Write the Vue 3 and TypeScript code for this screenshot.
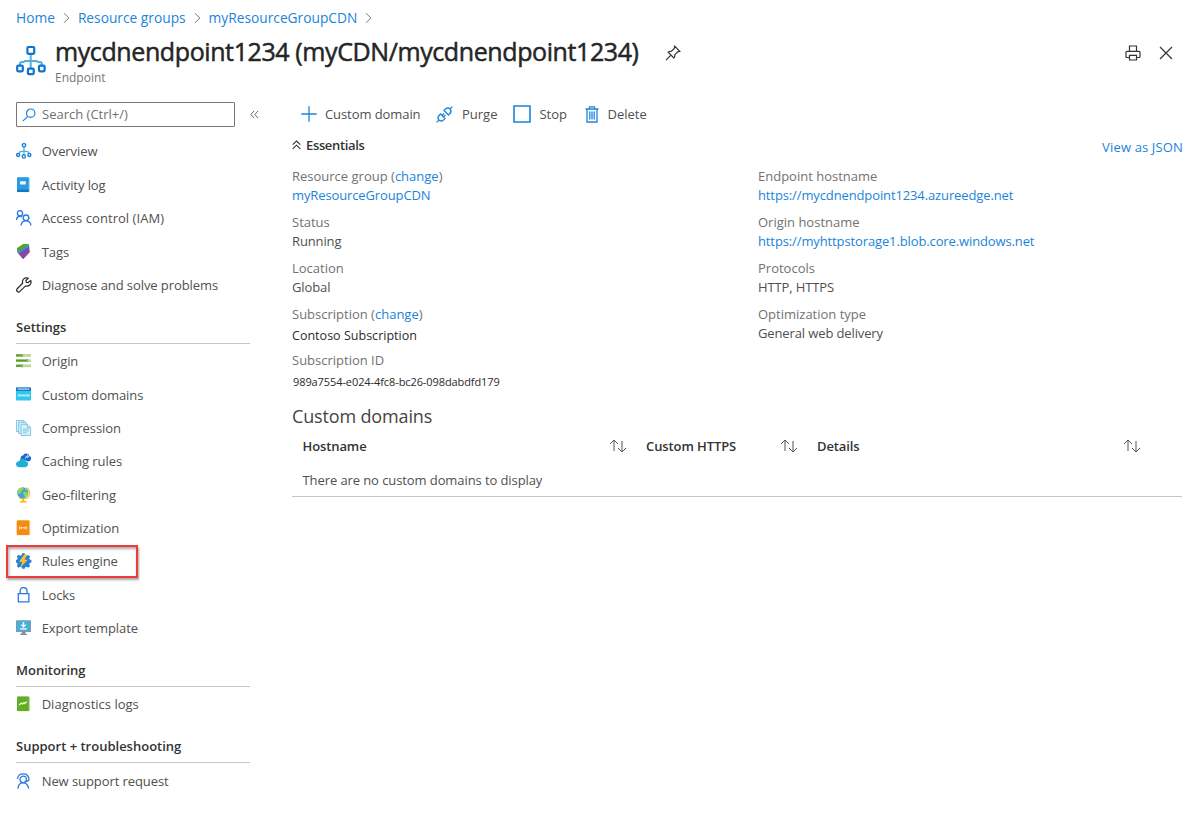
<script setup lang="ts">
interface NavItem {
  label: string
  icon: string
  marked?: boolean
}
interface NavGroup {
  title?: string
  items: NavItem[]
}

const icons: Record<string, string> = {
  endpoint:
    '<path d="M8 4.5V11M3 11.5Q3 8.3 5.4 8.3H10.6Q13 8.3 13 11.5" fill="none" stroke="#50b0dc" stroke-width="1.3"/><g fill="#fff" stroke="#1f86d6" stroke-width="1.4"><circle cx="8" cy="2.3" r="1.7"/><circle cx="2.1" cy="12" r="1.5"/><circle cx="13.4" cy="12" r="1.5"/><circle cx="7.8" cy="13.4" r="1.6"/></g>',
  log:
    '<rect x="1" y=".2" width="13" height="15" rx="1" fill="#b9dcf3"/><rect x="1" y=".2" width="11.8" height="14.8" rx="1" fill="#2b9ae2"/><rect x="1" y="12.6" width="11.8" height="2.4" fill="#1577c4"/><rect x="4" y="4.3" width="5.8" height="3.3" rx=".5" fill="#eef8ff"/>',
  people:
    '<g fill="none" stroke="#2b79e0" stroke-width="1.35"><circle cx="4" cy="3.2" r="2.6"/><path d="M.4 10Q1 6.2 4 6.2Q5.2 6.2 6 6.9"/><circle cx="10" cy="7.8" r="2.8"/><path d="M5 15.4Q5.7 10.8 10 10.8T15 15.4"/></g>',
  tag:
    '<path d="M1 4.900Q1 4.400 1.500 4L7 .3 11.600 0Q12.600 0 13 1L13.800 8.300 7.600 14.800Q7 15.300 6.400 14.600L1.800 9Z" fill="#8547a8"/><path d="M1 4.900Q1 4.400 1.500 4L7 .3 11.600 0Q12.600 0 12.900.7L1.500 7.400Z" fill="#58a51c"/><path d="M1.500 7.300 12.900.6 13.200 2.600 2.500 9.600 1.800 9Z" fill="#2d9fbd"/>',
  wrench:
    '<path d="M14.7 3.5 12.2 5.6 10.3 5.3 10 3.5 12.2 1.2Q9.5.2 7.5 2.1 6 3.8 6.6 6.2L1 12Q.2 13.3 1.3 14.5 2.6 15.5 3.9 14.4L9.6 8.9Q12.2 9.7 14 7.8 15.6 6 14.7 3.5Z" fill="none" stroke="#333" stroke-width="1.3" stroke-linejoin="round"/>',
  origin:
    '<g fill="#b8dc9b"><rect x="0" y="1" width="15" height="2.8"/><rect x="0" y="6.2" width="15" height="2.8"/><rect x="0" y="11.4" width="15" height="2.8"/></g><g fill="#559f1b"><rect x="0" y="1.4" width="5.5" height="2"/><rect x="0" y="6.6" width="10.5" height="2"/><rect x="0" y="11.8" width="5.5" height="2"/></g><g fill="#9b9b9b"><rect x="5" y="1" width="2" height="2.8"/><rect x="10" y="6.2" width="2" height="2.8"/><rect x="5" y="11.4" width="2" height="2.8"/></g>',
  www:
    '<rect y=".6" width="15" height="13" rx=".8" fill="#32c7ee"/><path d="M0 1.4Q0 .6.8.6H14.2Q15 .6 15 1.4V3.7H0Z" fill="#0c68b4"/><rect x="1.4" y="1.5" width="12.2" height="1.1" fill="#dff3ff"/><path d="m2 7.3.9 2.2.9-2.2.9 2.2.8-2.2m.6 0 .9 2.2.8-2.2.9 2.2.8-2.2m.6 0 .9 2.2.8-2.2.9 2.2.8-2.2" fill="none" stroke="#d5f7ff" stroke-width=".8"/>',
  compress:
    '<g fill="#dcf2fb" stroke="#74bfe0" stroke-width=".9"><path d="M.4.4H8V11.5H.4Z"/><path d="M2.7 2.3H10V13.4H2.7Z"/><path d="M5 4.3H11.5L14.6 7.3V15.5H5Z"/><path d="M11.3 4.5V7.4H14.6M6.8 9.1H12.8M6.8 11H12.8M6.8 12.9H10.8"/></g>',
  caching:
    '<path d="M4.5 6Q4.4 2.8 7 2.4 8.2.2 10.6.5 13 .8 13.5 3 15.4 3.7 15.1 6 14.7 7.7 12.6 8.5Z" fill="#1868cf"/><path d="M9.3 5.6Q9.5 3 12.2 3.2M11 1.8l1.6 1.5-1.5 1.5" fill="none" stroke="#a4d8fa" stroke-width="1.1"/><path d="M3 14.2Q0 13.8 0 11.1.1 8.5 3 8.2 3.7 5.6 6.3 5.5 9.1 5.6 9.7 8.2 12.1 8.4 12.2 11.1 12.1 13.9 9.6 14.2Z" fill="#20afd1"/>',
  geo:
    '<path d="M10.5.6Q14.2 3 13.4 7.3 12.2 12 7.6 12 4.7 12.1 2.8 10" fill="none" stroke="#f4c430" stroke-width="1.3"/><circle cx="6.8" cy="5.8" r="5.6" fill="#3aa5dd"/><path d="M2 3Q5 .2 7.8.6L7 3 5.500 4 5 6 3 7 1.400 6Q1.200 4.200 2 3ZM7.200 5l3-.3 2 2-1 2.500-2 1.300-1.600-2.700ZM9 1l2.300 1.700-2 .9Z" fill="#9ed053"/><path d="M6.500 12H8v2h2.500v1.500H4V14h2.500Z" fill="#f4b417"/>',
  optimize:
    '<rect x=".8" y=".2" width="13.4" height="15" rx="1" fill="#ffc16a"/><rect x=".8" y=".6" width="12.2" height="14.4" rx=".8" fill="#f68b12"/><path d="M4 6Q2.6 7.8 4 9.6M10 6Q11.4 7.8 10 9.6M5.5 7.8H8.7" fill="none" stroke="#ffe9c8" stroke-width="1"/><circle cx="5.4" cy="7.8" r=".9" fill="#fff6e5"/><circle cx="8.7" cy="7.8" r=".9" fill="#fff6e5"/>',
  rules:
    '<path d="m6.2.2 2.5 0 .5 1.9 1.4.7 1.8-.9 1.7 1.7-.9 1.8.5 1.2 1.7.4v2.4l-1.7.5-.5 1.3.9 1.7-1.7 1.8-1.8-.9-1.4.5-.5 1.5H6.2l-.5-1.5-1.4-.6-1.8 1-1.7-1.8.9-1.7-.5-1.3L0 9.4V6.9l1.2-.4.5-1.3-.9-1.7L2.5 1.8l1.8.9 1.4-.6Z" fill="#2781db"/><path d="M8.3 1.500 3 8.800h3.400L4.300 14.500 11.800 6.800H8.500L11.500 1.500Z" fill="#ffc329"/>',
  lock:
    '<path d="M2.3 6.6H12.9V14.8H2.3ZM4.2 6.6V3.9Q4.2.5 7.6.5T11 3.9V6.6" fill="none" stroke="#2b79e0" stroke-width="1.3"/>',
  export:
    '<rect x="0" y=".3" width="15" height="11.7" rx=".6" fill="#8b979e"/><rect x=".8" y="1" width="13.4" height="10.2" fill="#48b0dc"/><path d="M5.9 12h3.4l.7 2h1v1H4v-1h1.2Z" fill="#899299"/><path d="M7.5 2v4.6M5.2 4.6l2.3 2.3 2.3-2.3M4.2 8.8h6.6" fill="none" stroke="#fff" stroke-width="1.3"/>',
  diagnostics:
    '<rect x="1" y=".4" width="13" height="14.9" rx="1" fill="#b5d991"/><rect x="1" y=".4" width="11.8" height="14.5" rx="1" fill="#63ac24"/><path d="m3 9 2.5-2 1 1.2L8 6.5l.5 1L11 5.8" fill="none" stroke="#f1fce3" stroke-width="1.2"/>',
  support:
    '<g fill="none" stroke="#2b79e0" stroke-width="1.3"><circle cx="7.2" cy="6.4" r="3.2"/><path d="M1.4 5.8Q2 .8 7.2.8T13 6.1Q13 8.3 10.2 8.3H8.5M1.9 15.6Q2.4 9.8 7.1 9.8T12.7 15.6"/></g>',
}

const nav: NavGroup[] = [
  {
    items: [
      { label: 'Overview', icon: 'endpoint' },
      { label: 'Activity log', icon: 'log' },
      { label: 'Access control (IAM)', icon: 'people' },
      { label: 'Tags', icon: 'tag' },
      { label: 'Diagnose and solve problems', icon: 'wrench' },
    ],
  },
  {
    title: 'Settings',
    items: [
      { label: 'Origin', icon: 'origin' },
      { label: 'Custom domains', icon: 'www' },
      { label: 'Compression', icon: 'compress' },
      { label: 'Caching rules', icon: 'caching' },
      { label: 'Geo-filtering', icon: 'geo' },
      { label: 'Optimization', icon: 'optimize' },
      { label: 'Rules engine', icon: 'rules', marked: true },
      { label: 'Locks', icon: 'lock' },
      { label: 'Export template', icon: 'export' },
    ],
  },
  { title: 'Monitoring', items: [{ label: 'Diagnostics logs', icon: 'diagnostics' }] },
  { title: 'Support + troubleshooting', items: [{ label: 'New support request', icon: 'support' }] },
]

interface Fact {
  label: string
  value: string
  change?: boolean
  link?: boolean
  kind?: string
}
const columns: Fact[][] = [
  [
    { label: 'Resource group', value: 'myResourceGroupCDN', change: true, link: true },
    { label: 'Status', value: 'Running' },
    { label: 'Location', value: 'Global' },
    { label: 'Subscription', value: 'Contoso Subscription', change: true, kind: 'name' },
    { label: 'Subscription ID', value: '989a7554-e024-4fc8-bc26-098dabdfd179', kind: 'guid' },
  ],
  [
    { label: 'Endpoint hostname', value: 'https://mycdnendpoint1234.azureedge.net', link: true },
    { label: 'Origin hostname', value: 'https://myhttpstorage1.blob.core.windows.net', link: true },
    { label: 'Protocols', value: 'HTTP, HTTPS' },
    { label: 'Optimization type', value: 'General web delivery' },
  ],
]
const crumbs = ['Home', 'Resource groups', 'myResourceGroupCDN']
const headers = ['Hostname', 'Custom HTTPS', 'Details']
</script>

<template>
  <div class="page">
    <nav class="crumbs">
      <template v-for="c in crumbs" :key="c">
        <a class="link">{{ c }}</a>
        <svg class="chev" width="7" height="12" viewBox="0 0 7 12"><path d="M1 1.2 5.8 6 1 10.8" /></svg>
      </template>
    </nav>

    <header class="head">
      <svg class="head-icon" width="30" height="31" viewBox="0 0 30 31">
        <path d="M14.7 9V23M4 21V18.5Q4 17 6 17H7.5L9 16H20.5L22 17H24Q25.8 17 25.8 18.5V21" fill="none" stroke="#50b0dc" stroke-width="2" />
        <g fill="#fff" stroke="#0f74cc" stroke-width="2.2">
          <rect x="11.4" y="2" width="6.8" height="6.8" rx="1" />
          <rect x="1.2" y="20.7" width="5.6" height="5.6" rx="1" />
          <rect x="11.9" y="23.6" width="5.8" height="5.6" rx="1" />
          <rect x="23" y="20.7" width="5.6" height="5.6" rx="1" />
        </g>
      </svg>
      <div class="titles">
        <h1>mycdnendpoint1234 (myCDN/mycdnendpoint1234)</h1>
        <span class="kind">Endpoint</span>
      </div>
      <svg class="pin" width="16" height="16" viewBox="0 0 16 16"><path d="M9.7 1.2 14.8 6.3 12.7 6.8 9.9 9.7Q9.9 11.7 8.9 13L3.1 7.2Q4.5 6.2 6.5 6.2L9.3 3.4ZM6 10.1 1 15.1" /></svg>
      <div class="head-actions">
        <svg width="16" height="16" viewBox="0 0 16 16"><path d="M4.5 6.2V1H11.5V6.2M4.3 12.5H2Q1 12.5 1 11.5V7.5Q1 6.3 2.2 6.3H13.8Q15 6.3 15 7.5V11.5Q15 12.5 14 12.5H11.7M4.5 10.3H11.5V15H4.5Z" /></svg>
        <svg width="14" height="14" viewBox="0 0 14 14"><path d="M1 1 13 13M13 1 1 13" /></svg>
      </div>
    </header>

    <div class="body">
      <aside class="side">
        <div class="search-row">
          <div class="search">
            <svg width="14" height="14" viewBox="0 0 14 14"><circle cx="8.7" cy="5.2" r="4.2" /><path d="M5.7 8.3.8 13.2" /></svg>
            <span>Search (Ctrl+/)</span>
          </div>
          <svg class="collapse" width="9" height="9" viewBox="0 0 9 9"><path d="M4.2.8.8 4.5 4.2 8.2M8.2.8 4.8 4.5 8.2 8.2" /></svg>
        </div>
        <section v-for="(g, i) in nav" :key="i">
          <h2 v-if="g.title">{{ g.title }}</h2>
          <div v-for="n in g.items" :key="n.label" class="item" :class="[n.icon, { marked: n.marked }]">
            <svg width="16" height="16" viewBox="0 0 16 16" v-html="icons[n.icon]"></svg>
            <span>{{ n.label }}</span>
          </div>
        </section>
      </aside>

      <main class="main">
        <div class="toolbar">
          <svg width="16" height="16" viewBox="0 0 16 16"><path d="M8 .3V15.7M.3 8H15.7" /></svg>
          <span class="add">Custom domain</span>
          <svg width="17" height="17" viewBox="0 0 17 17"><path d="M.6 16.400 2.900 14.100M16.400.6 14.100 2.900M2.900 14.100Q1 11.500 3 9.500L4.500 8 9 12.500 7.500 14Q5.300 16 2.900 14.100ZM14.100 2.900Q16 5.500 14 7.500L12.500 9 8 4.500 9.500 3Q11.700 1 14.100 2.900ZM6 9.500 8 7.500M7.500 11 9.500 9" /></svg>
          <span class="purge">Purge</span>
          <svg width="18" height="18" viewBox="0 0 18 18"><path d="M1 1H17V17H1Z" stroke-width="1.6" /></svg>
          <span class="stop">Stop</span>
          <svg width="14" height="17" viewBox="0 0 14 17"><path d="M.5 3H13.5M4.5 2.8V.8H9.5V2.8M2 3V16H12V3M4.8 5.5V13.5M7 5.5V13.5M9.2 5.5V13.5" /></svg>
          <span class="delete">Delete</span>
        </div>

        <div class="ess-head">
          <svg width="9" height="10" viewBox="0 0 9 10"><path d="M.7 4.7 4.5 1 8.3 4.7M.7 8.9 4.5 5.2 8.3 8.9" /></svg>
          <strong>Essentials</strong>
          <a class="link">View as JSON</a>
        </div>

        <div class="facts">
          <dl v-for="(col, i) in columns" :key="i">
            <div v-for="f in col" :key="f.label" class="fact">
              <dt>{{ f.label }}<template v-if="f.change"> (<a class="link">change</a>)</template></dt>
              <dd :class="[f.kind, { link: f.link }]">{{ f.value }}</dd>
            </div>
          </dl>
        </div>

        <h3>Custom domains</h3>
        <div class="table">
          <div class="thead">
            <div v-for="h in headers" :key="h" class="th">
              <span>{{ h }}</span>
              <svg width="18" height="14" viewBox="0 0 18 14"><path d="M5 12V1M1 5 5 1 9 5M13 2V13M9 9 13 13 17 9" /></svg>
            </div>
          </div>
          <div class="empty">There are no custom domains to display</div>
        </div>
      </main>
    </div>
  </div>
</template>

<style>
html,
body {
  margin: 0;
  background: #fff;
}
</style>

<style scoped>
.page {
  width: 1200px;
  height: 835px;
  overflow: hidden;
  box-sizing: border-box;
  padding: 7px 17px 0 16px;
  background: #fff;
  color: #505050;
  font: 13px/20px "Open Sans", "Noto Sans", sans-serif;
  white-space: nowrap;
}
svg {
  flex: none;
  display: block;
}
.link {
  color: #1b84d8;
}
.crumbs {
  display: flex;
  align-items: center;
  height: 22px;
  font-size: 13.75px;
}
.chev {
  margin: 0 8px;
  fill: none;
  stroke: #777;
}
.head {
  display: flex;
  height: 73px;
}
.head-icon {
  margin: 16px 9px 0 0;
}
.titles {
  width: 584px;
}
h1 {
  margin: 4px 0 0;
  height: 37px;
  font-size: 25px;
  line-height: 36px;
  font-weight: 400;
  letter-spacing: -0.4px;
  -webkit-text-stroke: 0.5px #252525;
  color: #252525;
}
.kind {
  display: block;
  font-size: 12px;
  line-height: 16px;
  color: #777;
}
.pin {
  margin: 16px 0 0 26px;
  fill: none;
  stroke: #333;
  stroke-width: 1.2;
}
.head-actions {
  display: flex;
  align-items: center;
  gap: 18px;
  margin-left: auto;
  height: 48px;
  padding-right: 10px;
  fill: none;
  stroke: #333;
  stroke-width: 1.2;
}
.body {
  display: flex;
}
.side {
  width: 244px;
  flex: none;
}
section {
  width: 234px;
}
.search-row {
  display: flex;
  align-items: center;
  gap: 15px;
  height: 25px;
  margin-bottom: 7.8px;
}
.search {
  display: flex;
  align-items: center;
  gap: 6px;
  width: 219px;
  height: 25px;
  box-sizing: border-box;
  padding-left: 5px;
  border: 1px solid #777;
  border-radius: 1px;
  color: #707070;
}
.search span {
  padding-bottom: 2px;
}
.search svg {
  fill: none;
  stroke: #1b84d8;
  stroke-width: 1.2;
}
.collapse {
  fill: none;
  stroke: #666;
}
.item {
  display: flex;
  align-items: center;
  gap: 9.7px;
  height: 33.35px;
  position: relative;
  letter-spacing: -0.08px;
}
.people {
  letter-spacing: 0.05px;
}
.diagnostics {
  letter-spacing: 0;
}
.marked::before {
  content: "";
  position: absolute;
  left: -10px;
  top: 0;
  width: 132px;
  height: 33px;
  box-sizing: border-box;
  border: 2px solid #ee3b3b;
  box-shadow: 1px 2px 2px rgba(0, 0, 0, 0.35), inset 1px 2px 3px rgba(0, 0, 0, 0.35);
}
h2 {
  box-sizing: border-box;
  height: 42px;
  margin: 0 0 1px;
  padding-top: 15px;
  border-bottom: 1px solid #c6c6c6;
  font-size: 13px;
  line-height: 20px;
  font-weight: 600;
  color: #333;
}
.main {
  flex: 1;
  min-width: 0;
  padding-left: 32px;
}
.toolbar {
  display: flex;
  align-items: center;
  height: 24px;
  padding-left: 9px;
  fill: none;
  stroke: #1b84d8;
  stroke-width: 1.3;
}
.add {
  margin: 0 16px 0 8px;
  letter-spacing: -0.08px;
}
.purge {
  margin: 0 16px 0 8.5px;
}
.stop {
  margin: 0 17.5px 0 8px;
}
.delete {
  margin-left: 9px;
}
.ess-head {
  display: flex;
  align-items: center;
  height: 20px;
  margin-top: 9px;
}
.ess-head svg {
  fill: none;
  stroke: #333;
  stroke-width: 1.1;
}
.ess-head strong {
  margin-left: 5px;
  font-weight: 600;
  letter-spacing: -0.35px;
  color: #333;
}
.ess-head .link {
  margin-left: auto;
  padding-top: 3px;
  letter-spacing: 0.15px;
}
.facts {
  display: flex;
  margin-top: 12.4px;
}
dl {
  margin: 0;
  width: 466px;
  flex: none;
}
dl:last-child {
  width: 420px;
}
.fact {
  height: 45.85px;
}
dt,
dd {
  margin: 0;
  line-height: 19px;
  height: 19px;
}
dt {
  color: #727272;
}
dd {
  letter-spacing: -0.12px;
}
dd.name {
  padding-top: 2px;
  color: #2b2b2b;
  font-size: 12.5px;
  letter-spacing: 0.02px;
}
dd.guid {
  padding: 2px 0 0 1px;
  color: #2b2b2b;
  font-size: 11px;
  letter-spacing: -0.09px;
}
h3 {
  margin: 6.6px 0 0;
  font-size: 18px;
  line-height: 26px;
  font-weight: 400;
  letter-spacing: -0.15px;
  color: #444;
}
.table {
  width: 890px;
  border-bottom: 1px solid #c6c6c6;
}
.thead {
  display: grid;
  grid-template-columns: 343.5px 171px 343px;
  height: 34px;
  padding-left: 10.5px;
}
.th {
  display: flex;
  align-items: center;
  justify-content: space-between;
  padding-right: 19px;
  font-weight: 600;
  letter-spacing: -0.1px;
  color: #333;
}
.th svg {
  fill: none;
  stroke: #555;
}
.empty {
  height: 33px;
  line-height: 35px;
  padding-left: 10.5px;
  letter-spacing: -0.09px;
}
</style>
